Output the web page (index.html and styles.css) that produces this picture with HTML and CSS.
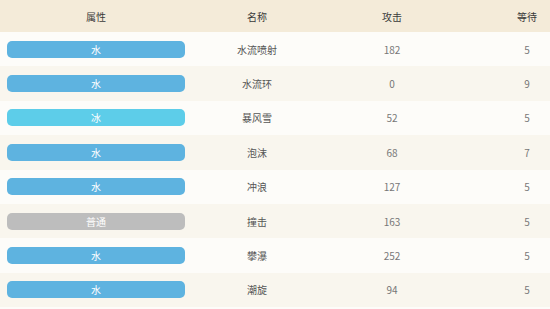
FILE: index.html
```html
<!DOCTYPE html>
<html lang="zh">
<head>
<meta charset="utf-8">
<link rel="stylesheet" href="styles.css">
</head>
<body>
<table class="moves">
<thead>
<tr><th class="c1">属性</th><th class="c2">名称</th><th class="c3">攻击</th><th class="c4">等待</th></tr>
</thead>
<tbody>
<tr><td><span class="badge water">水</span></td><td class="name">水流喷射</td><td class="num">182</td><td class="num last">5</td></tr>
<tr><td><span class="badge water">水</span></td><td class="name">水流环</td><td class="num">0</td><td class="num last">9</td></tr>
<tr><td><span class="badge ice">冰</span></td><td class="name">暴风雪</td><td class="num">52</td><td class="num last">5</td></tr>
<tr><td><span class="badge water">水</span></td><td class="name">泡沫</td><td class="num">68</td><td class="num last">7</td></tr>
<tr><td><span class="badge water">水</span></td><td class="name">冲浪</td><td class="num">127</td><td class="num last">5</td></tr>
<tr><td><span class="badge normal">普通</span></td><td class="name">撞击</td><td class="num">163</td><td class="num last">5</td></tr>
<tr><td><span class="badge water">水</span></td><td class="name">攀瀑</td><td class="num">252</td><td class="num last">5</td></tr>
<tr><td><span class="badge water">水</span></td><td class="name">潮旋</td><td class="num">94</td><td class="num last">5</td></tr>
</tbody>
</table>
</body>
</html>
```
FILE: styles.css
```css
html, body {
  margin: 0;
  padding: 0;
  background: #fdfcf9;
}
.moves {
  width: 550px;
  border-collapse: collapse;
  table-layout: fixed;
  font-family: "Noto Sans CJK SC", "Noto Sans", sans-serif;
  font-size: 10px;
}
.moves th,
.moves td {
  box-sizing: border-box;
}
.c1 { width: 192px; }
.c2 { width: 130px; }
.c3 { width: 140px; }
.c4 { width: 88px; }
.moves th {
  height: 32px;
  padding: 0;
  background: #f4ebd9;
  color: #3a3a3a;
  font-weight: normal;
  text-align: center;
}
.moves td {
  height: 34.4px;
  padding: 0;
  text-align: center;
  color: #555;
}
.moves th.c4,
.moves td.last {
  padding-left: 42px;
}
.moves tbody tr:nth-child(odd) td { background: #fdfcf9; }
.moves tbody tr:nth-child(even) td { background: #f9f6ee; }
.moves td.num { color: #777; }
.badge {
  display: block;
  margin: 0 7px;
  height: 17px;
  line-height: 17px;
  border-radius: 5px;
  color: #fff;
  font-size: 10px;
}
.water { background: #5eb3e0; }
.ice { background: #5dcde9; }
.normal { background: #bdbdbd; }
```
